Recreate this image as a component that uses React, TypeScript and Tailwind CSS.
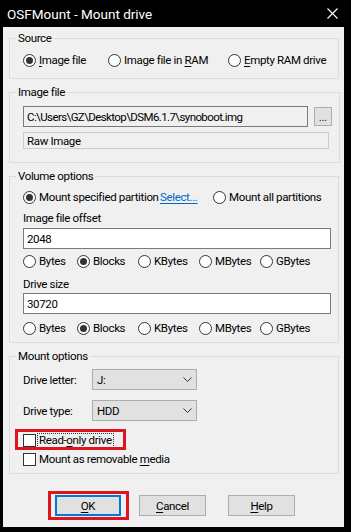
import React from 'react';

type Opt = { label: React.ReactNode; checked?: boolean; w: string };

const Radio = ({ label, checked, w }: Opt) => (
    <div className={`flex items-center h-4 shrink-0 ${w}`}>
        <span className="w-[13px] h-[13px] rounded-full border border-[#333333] bg-white flex items-center justify-center shrink-0">
            {checked && <span className="w-[7px] h-[7px] rounded-full bg-[#333333]" />}
        </span>
        <span className="ml-[3px] whitespace-nowrap">{label}</span>
    </div>
);

const Check = ({ label, focused }: { label: React.ReactNode; focused?: boolean }) => (
    <div className="flex items-center h-4">
        <span className="w-[13px] h-[13px] border border-[#333333] bg-white shrink-0" />
        <span className={`ml-[2px] px-[1px] leading-[13px] whitespace-nowrap ${focused ? 'outline outline-1 outline-dotted outline-[#333333]' : ''}`}>{label}</span>
    </div>
);

const Chevron = () => (
    <svg width="9" height="5" viewBox="0 0 9 5" className="shrink-0">
        <polyline points="0.5,0.5 4.5,4.5 8.5,0.5" fill="none" stroke="#333333" strokeWidth="1" />
    </svg>
);

const Select = ({ value }: { value: string }) => (
    <div className="w-[105px] h-[21px] bg-[#e1e1e1] border border-[#adadad] flex items-center justify-between pl-[4px] pr-[4px]">
        <span>{value}</span>
        <Chevron />
    </div>
);

const U = ({ children }: { children: React.ReactNode }) => <span className="underline underline-offset-2">{children}</span>;

const units = (
    <div className="flex h-4">
        <Radio w="w-[54px]" label="Bytes" />
        <Radio w="w-[61px]" label="Blocks" checked />
        <Radio w="w-[61px]" label="KBytes" />
        <Radio w="w-[61px]" label="MBytes" />
        <Radio w="w-[61px]" label="GBytes" />
    </div>
);

const Field = ({ value }: { value: string }) => (
    <div className="h-[21px] w-full bg-white border border-[#7a7a7a] flex items-center pl-[3px]">{value}</div>
);

const legend = "-ml-[7px] px-[2px] leading-4 text-[#000]";

export default function App() {
    return (
        <div className="w-[351px] h-[532px] bg-black overflow-hidden text-[11.5px] tracking-[-0.35px] text-black leading-4" style={{ fontFamily: 'Roboto, "Liberation Sans", Arial, sans-serif' }}>
            {/* title bar */}
            <div className="h-[27px] flex items-center justify-between pl-[7px] pr-[13px] text-white text-[13.5px] tracking-normal">
                <span>OSFMount - Mount drive</span>
                <svg width="11" height="11" viewBox="0 0 11 11">
                    <path d="M0.5 0.5 L10.5 10.5 M10.5 0.5 L0.5 10.5" stroke="#ffffff" strokeWidth="1.1" />
                </svg>
            </div>

            <div className="ml-[3px] w-[341px] h-[500px] bg-[#f0f0f0] flex flex-col pl-[6px]">
                {/* Source */}
                <fieldset className="mt-[3px] w-[330px] border border-[#dcdcdc] pl-[13px] pr-[7px] pt-[6px] pb-[10px]">
                    <legend className={legend}>Source</legend>
                    <div className="flex h-4">
                        <Radio w="w-[85px]" label={<><U>I</U>mage file</>} checked />
                        <Radio w="w-[120px]" label={<>Image file in <U>R</U>AM</>} />
                        <Radio w="w-[100px]" label={<><U>E</U>mpty RAM drive</>} />
                    </div>
                </fieldset>

                {/* Image file */}
                <fieldset className="mt-[5px] w-[330px] border border-[#dcdcdc] pl-[13px] pr-[7px] pt-[6px] pb-[13px]">
                    <legend className={legend}>Image file</legend>
                    <div className="flex items-start gap-[6px]">
                        <div className="h-[21px] w-[285px] bg-[#f0f0f0] border border-[#7a7a7a] flex items-center pl-[3px] tracking-[-0.6px]">C:\Users\GZ\Desktop\DSM6.1.7\synoboot.img</div>
                        <div className="mt-[1px] w-[18px] h-[19px] bg-[#e1e1e1] border border-[#adadad] flex items-end justify-center text-[10px] leading-[12px] pb-[1px] tracking-normal">...</div>
                    </div>
                    <div className="mt-[5px] w-[306px] h-[17px] border border-[#cccccc] flex items-center pl-[3px]">Raw Image</div>
                </fieldset>

                {/* Volume options */}
                <fieldset className="mt-[5px] w-[330px] border border-[#dcdcdc] pl-[13px] pr-[7px] pt-[5px] pb-[6px]">
                    <legend className={legend}>Volume options</legend>
                    <div className="flex h-4">
                        <Radio w="w-[137px]" label="Mount specified partition" checked />
                        <span className="w-[53px] text-[#0066cc] underline underline-offset-2 whitespace-nowrap">Select...</span>
                        <Radio w="w-[110px]" label="Mount all partitions" />
                    </div>
                    <div className="mt-[5px] h-4">Image file offset</div>
                    <div className="mt-[2px]"><Field value="2048" /></div>
                    <div className="mt-[4px]">{units}</div>
                    <div className="mt-[7px] h-4">Drive size</div>
                    <div className="mt-[1px]"><Field value="30720" /></div>
                    <div className="mt-[6px]">{units}</div>
                </fieldset>

                {/* Mount options */}
                <fieldset className="mt-[5px] w-[330px] border border-[#dcdcdc] pl-[13px] pr-[7px] pt-[5px] pb-[6px]">
                    <legend className={legend}>Mount options</legend>
                    <div className="flex items-center">
                        <span className="w-[69px]">Drive letter:</span>
                        <Select value="J:" />
                    </div>
                    <div className="mt-[10px] flex items-center">
                        <span className="w-[69px]">Drive type:</span>
                        <Select value="HDD" />
                    </div>
                    <div className="mt-[11px] relative">
                        <Check label={<>Read-<U>o</U>nly drive</>} focused />
                        <div className="absolute left-[-8px] top-[-3px] w-[111px] h-[21px] border-[3px] border-[#e0141e]" />
                    </div>
                    <div className="mt-[3px]">
                        <Check label={<>Mount as removable <U>m</U>edia</>} />
                    </div>
                </fieldset>

                {/* buttons */}
                <div className="mt-[21px] flex items-center">
                    <div className="ml-[46px] relative w-[66px] h-[21px] border-2 border-[#0078d7] bg-[#e1e1e1] flex items-center justify-center">
                        <span><U>O</U>K</span>
                        <div className="absolute left-[-9px] top-[-6px] w-[81px] h-[29px] border-[3px] border-[#e0141e]" />
                    </div>
                    <div className="ml-[18px] w-[67px] h-[21px] border border-[#adadad] bg-[#e1e1e1] flex items-center justify-center">
                        <span><U>C</U>ancel</span>
                    </div>
                    <div className="ml-[22px] w-[67px] h-[21px] border border-[#adadad] bg-[#e1e1e1] flex items-center justify-center">
                        <span><U>H</U>elp</span>
                    </div>
                </div>
            </div>
        </div>
    );
}
